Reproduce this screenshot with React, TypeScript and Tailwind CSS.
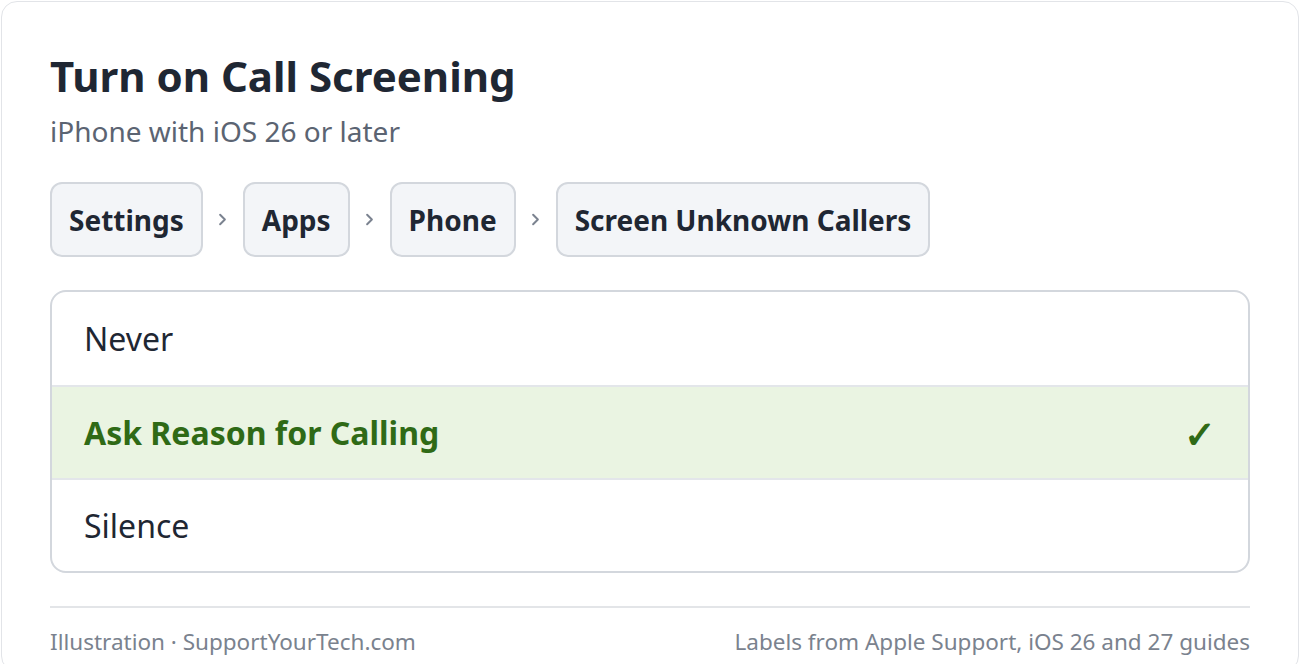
import { ChevronRight } from 'lucide-react'

const crumbs = ['Settings', 'Apps', 'Phone', 'Screen Unknown Callers']

const options = [
  { label: 'Never', selected: false },
  { label: 'Ask Reason for Calling', selected: true },
  { label: 'Silence', selected: false },
]

export default function App() {
  return (
    <div className="min-h-screen bg-white p-px" style={{ fontFamily: '"Noto Sans", "Open Sans", sans-serif' }}>
      <div className="rounded-2xl border border-[#e2e4e8] bg-white px-12 pt-12 pb-3">
        {/* Header */}
        <h1 className="mt-[2px] text-[42px] font-bold leading-[48px] text-[#1f2733]">Turn on Call Screening</h1>
        <p className="mt-[13px] text-[28px] leading-[36px] text-[#5b6472]">iPhone with iOS 26 or later</p>

        {/* Breadcrumb path */}
        <div className="mt-[33px] flex items-center">
          {crumbs.map((c, i) => (
            <div key={c} className="flex items-center">
              {i > 0 && (
                <span className="flex w-[40px] justify-center text-[#7b8390]">
                  <ChevronRight className="h-[19px] w-[19px]" strokeWidth={2.5} />
                </span>
              )}
              <span className="flex h-[75px] items-center rounded-xl border-2 border-[#d3d7dd] bg-[#f3f5f8] px-[17px] text-[28px] font-bold text-[#1f2733]">
                {c}
              </span>
            </div>
          ))}
        </div>

        {/* Options */}
        <div className="mt-[33px] overflow-hidden rounded-2xl border-2 border-[#d3d7dd]">
          {options.map((o, i) => (
            <div
              key={o.label}
              className={`flex h-[93px] items-center justify-between px-[32px] ${i > 0 ? 'border-t-2 border-[#e3e6ea]' : ''} ${
                o.selected ? 'bg-[#eaf4e2] font-bold text-[#2f6a16]' : 'text-[#1f2733]'
              }`}
            >
              <span className="text-[32px]">{o.label}</span>
              {o.selected && <span className="text-[38px] leading-none">✓</span>}
            </div>
          ))}
        </div>

        {/* Footer */}
        <div className="mt-[33px] flex items-center justify-between border-t-2 border-[#e3e5e8] pt-[17px] text-[22.5px] text-[#7a828e]">
          <span>Illustration · SupportYourTech.com</span>
          <span>Labels from Apple Support, iOS 26 and 27 guides</span>
        </div>
      </div>
    </div>
  )
}
